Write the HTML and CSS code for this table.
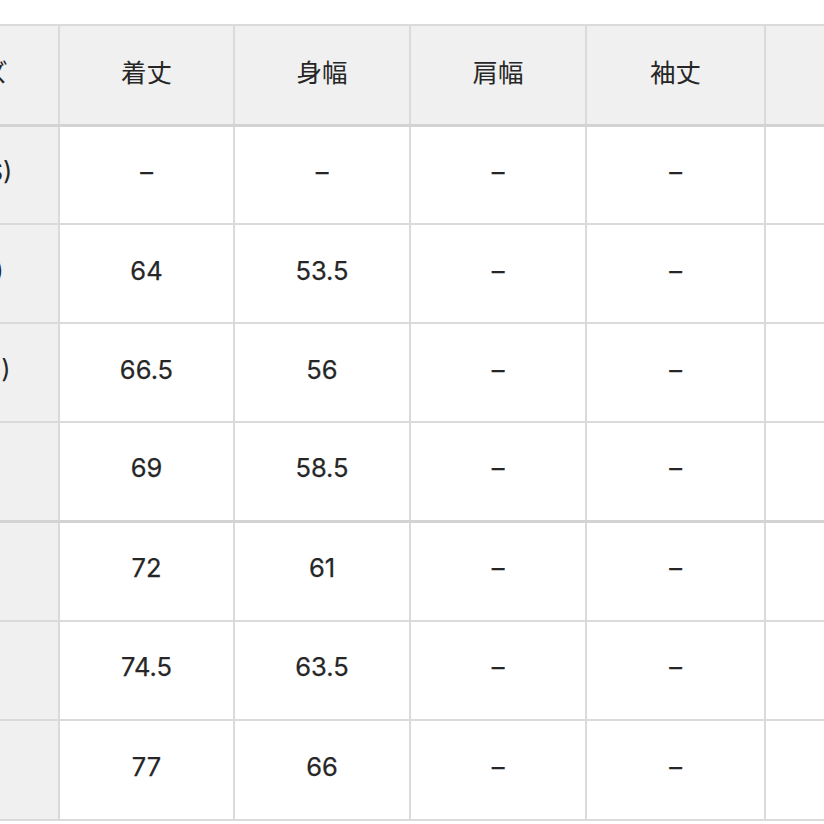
FILE: index.html
```html
<!DOCTYPE html>
<html lang="ja">
<head>
<meta charset="utf-8">
<title>サイズ表</title>
<link rel="stylesheet" href="styles.css">
</head>
<body>
<table class="size-table">
  <colgroup>
    <col class="col-label">
    <col class="col-first">
    <col class="col-data">
    <col class="col-data">
    <col class="col-wide">
    <col class="col-last">
  </colgroup>
  <thead>
    <tr>
      <th class="label">サイズ</th>
      <th>着丈</th>
      <th>身幅</th>
      <th>肩幅</th>
      <th>袖丈</th>
      <th>裄丈</th>
    </tr>
  </thead>
  <tbody>
    <tr><th class="label">XS(SS)</th><td>–</td><td>–</td><td>–</td><td>–</td><td>–</td></tr>
    <tr><th class="label">SS(S)</th><td>64</td><td>53.5</td><td>–</td><td>–</td><td>–</td></tr>
    <tr><th class="label">SM(M)</th><td>66.5</td><td>56</td><td>–</td><td>–</td><td>–</td></tr>
    <tr class="group-end"><th class="label">L</th><td>69</td><td>58.5</td><td>–</td><td>–</td><td>–</td></tr>
    <tr class="tall"><th class="label">XL</th><td>72</td><td>61</td><td>–</td><td>–</td><td>–</td></tr>
    <tr class="tall"><th class="label">XXL</th><td>74.5</td><td>63.5</td><td>–</td><td>–</td><td>–</td></tr>
    <tr class="tall"><th class="label">3XL</th><td>77</td><td>66</td><td>–</td><td>–</td><td>–</td></tr>
  </tbody>
</table>
</body>
</html>
```
FILE: styles.css
```css
html, body {
  margin: 0;
  padding: 0;
  background: #ffffff;
  overflow: hidden;
}

body {
  font-family: "Inter", "Noto Sans CJK JP", sans-serif;
  font-size: 25.5px;
  color: #262626;
}

.size-table {
  border-collapse: collapse;
  table-layout: fixed;
  width: 1066px;
  margin: 24px 0 0 -120px;
}

.col-label { width: 178px; }
.col-first { width: 175px; }
.col-data { width: 176px; }
.col-wide { width: 179px; }
.col-last { width: 182px; }

.size-table th,
.size-table td {
  border: 2px solid #dadada;
  text-align: center;
  vertical-align: middle;
  padding: 0 0 6px 0;
  font-weight: 400;
  line-height: 30px;
}

.size-table td {
  -webkit-text-stroke: 0.25px #262626;
}

.size-table tr {
  height: 99px;
}

.size-table tr.tall {
  height: 99.6px;
}

.size-table thead th {
  background: #f0f0f0;
  border-bottom: 3px solid #d3d3d3;
  font-family: "Noto Sans CJK JP", sans-serif;
  padding-bottom: 8px;
}

.size-table thead tr {
  height: 100px;
}

.size-table th.label {
  background: #f0f0f0;
}

.size-table tr.group-end th,
.size-table tr.group-end td {
  border-bottom: 3px solid #d3d3d3;
}
```
